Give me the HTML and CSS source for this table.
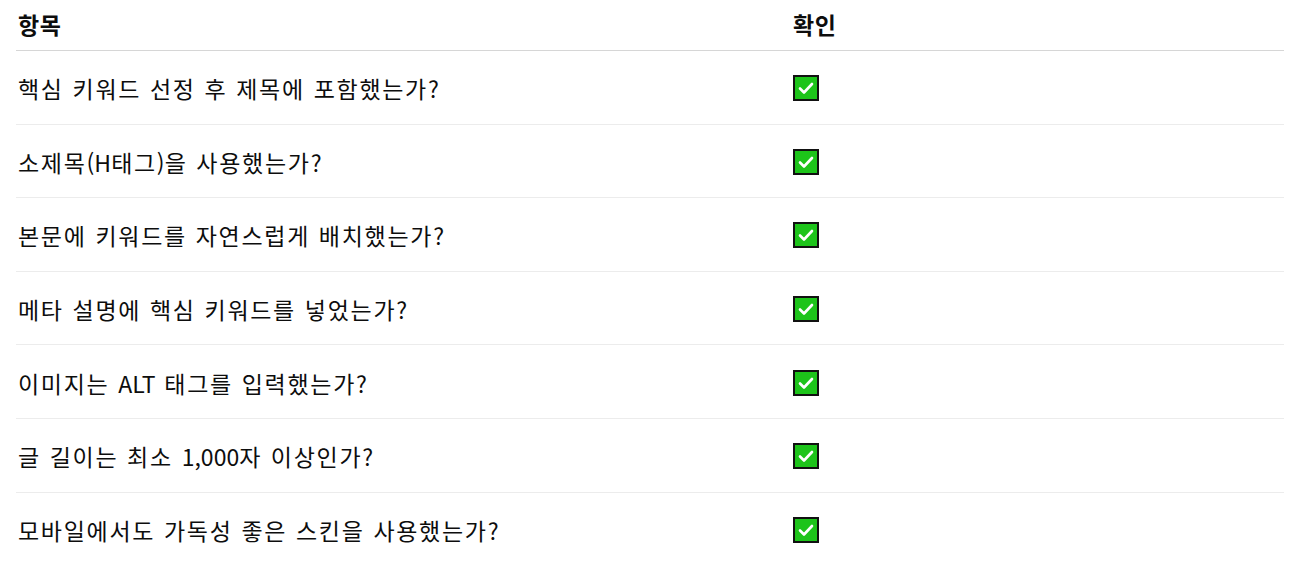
FILE: index.html
```html
<!DOCTYPE html>
<html lang="ko">
<head>
<meta charset="utf-8">
<link rel="stylesheet" href="styles.css">
</head>
<body>
<div class="table">
  <div class="row head">
    <div class="cell c1">항목</div>
    <div class="cell c2">확인</div>
  </div>
  <div class="row">
    <div class="cell c1">핵심 키워드 선정 후 제목에 포함했는가?</div>
    <div class="cell c2"><svg class="check" viewBox="0 0 26 26"><rect x="1" y="1" width="24" height="24" fill="#1dc41a" stroke="#111" stroke-width="2"/><path d="M7 13.5 L11 17.5 L19 9" fill="none" stroke="#fff" stroke-width="2.6" stroke-linecap="round" stroke-linejoin="round"/></svg></div>
  </div>
  <div class="row">
    <div class="cell c1">소제목<span class="lat">(H</span>태그<span class="lat">)</span>을 사용했는가?</div>
    <div class="cell c2"><svg class="check" viewBox="0 0 26 26"><rect x="1" y="1" width="24" height="24" fill="#1dc41a" stroke="#111" stroke-width="2"/><path d="M7 13.5 L11 17.5 L19 9" fill="none" stroke="#fff" stroke-width="2.6" stroke-linecap="round" stroke-linejoin="round"/></svg></div>
  </div>
  <div class="row">
    <div class="cell c1">본문에 키워드를 자연스럽게 배치했는가?</div>
    <div class="cell c2"><svg class="check" viewBox="0 0 26 26"><rect x="1" y="1" width="24" height="24" fill="#1dc41a" stroke="#111" stroke-width="2"/><path d="M7 13.5 L11 17.5 L19 9" fill="none" stroke="#fff" stroke-width="2.6" stroke-linecap="round" stroke-linejoin="round"/></svg></div>
  </div>
  <div class="row">
    <div class="cell c1">메타 설명에 핵심 키워드를 넣었는가?</div>
    <div class="cell c2"><svg class="check" viewBox="0 0 26 26"><rect x="1" y="1" width="24" height="24" fill="#1dc41a" stroke="#111" stroke-width="2"/><path d="M7 13.5 L11 17.5 L19 9" fill="none" stroke="#fff" stroke-width="2.6" stroke-linecap="round" stroke-linejoin="round"/></svg></div>
  </div>
  <div class="row">
    <div class="cell c1">이미지는 <span class="lat">ALT</span> 태그를 입력했는가?</div>
    <div class="cell c2"><svg class="check" viewBox="0 0 26 26"><rect x="1" y="1" width="24" height="24" fill="#1dc41a" stroke="#111" stroke-width="2"/><path d="M7 13.5 L11 17.5 L19 9" fill="none" stroke="#fff" stroke-width="2.6" stroke-linecap="round" stroke-linejoin="round"/></svg></div>
  </div>
  <div class="row">
    <div class="cell c1">글 길이는 최소 <span class="lat">1,000</span>자 이상인가?</div>
    <div class="cell c2"><svg class="check" viewBox="0 0 26 26"><rect x="1" y="1" width="24" height="24" fill="#1dc41a" stroke="#111" stroke-width="2"/><path d="M7 13.5 L11 17.5 L19 9" fill="none" stroke="#fff" stroke-width="2.6" stroke-linecap="round" stroke-linejoin="round"/></svg></div>
  </div>
  <div class="row last">
    <div class="cell c1">모바일에서도 가독성 좋은 스킨을 사용했는가?</div>
    <div class="cell c2"><svg class="check" viewBox="0 0 26 26"><rect x="1" y="1" width="24" height="24" fill="#1dc41a" stroke="#111" stroke-width="2"/><path d="M7 13.5 L11 17.5 L19 9" fill="none" stroke="#fff" stroke-width="2.6" stroke-linecap="round" stroke-linejoin="round"/></svg></div>
  </div>
</div>
</body>
</html>
```
FILE: styles.css
```css
html, body {
  margin: 0;
  padding: 0;
  background: #fff;
}
body {
  padding: 0 30px 0 16px;
  font-family: "Noto Sans CJK KR", "Noto Sans", sans-serif;
  color: #0d0d0d;
  font-size: 23px;
}
.table {
  display: flex;
  flex-direction: column;
}
.row {
  display: grid;
  grid-template-columns: 774px 1fr;
  align-items: center;
  height: 72.6px;
  border-bottom: 1px solid #ececec;
}
.row.head {
  height: 50px;
  border-bottom: 1px solid #d6d6d6;
  font-weight: 700;
}
.row.last {
  border-bottom: none;
}
.cell {
  padding-left: 2px;
  padding-top: 2px;
  letter-spacing: 1.7px;
  word-spacing: 0.7px;
  white-space: nowrap;
}
.lat {
  letter-spacing: 0;
}
.c2 {
  display: flex;
  align-items: center;
  padding-left: 3px;
}
.head .cell {
  padding-top: 0;
  padding-bottom: 2px;
  letter-spacing: 0.5px;
}
.check {
  width: 26px;
  height: 26px;
  display: block;
}
```
